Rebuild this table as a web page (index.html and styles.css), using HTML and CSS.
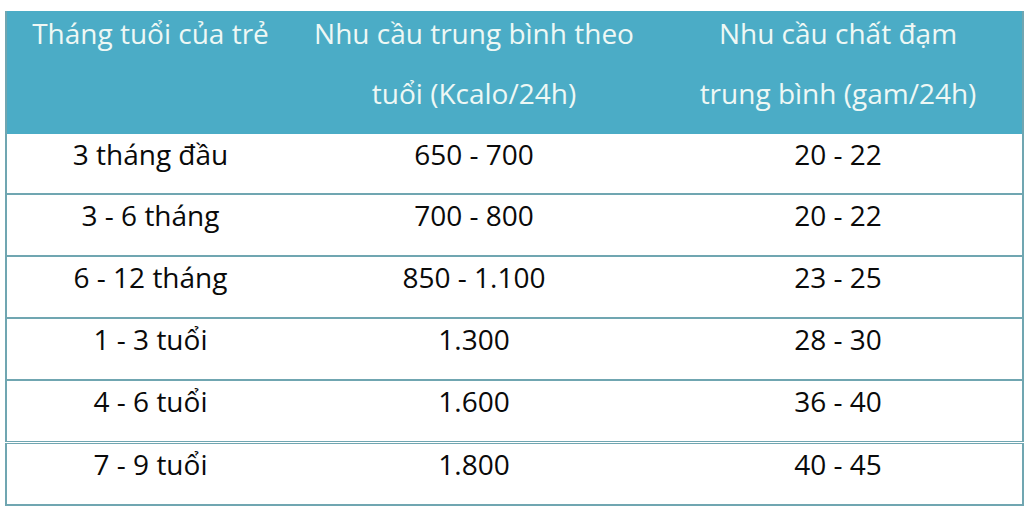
FILE: index.html
```html
<!DOCTYPE html>
<html lang="vi">
<head>
<meta charset="utf-8">
<link rel="stylesheet" href="styles.css">
</head>
<body>
<table class="nutri">
  <colgroup>
    <col class="c1"><col class="c2"><col class="c3">
  </colgroup>
  <thead>
    <tr>
      <th><div class="hd">Tháng tuổi của trẻ</div></th>
      <th><div class="hd">Nhu cầu trung bình theo<br>tuổi (Kcalo/24h)</div></th>
      <th><div class="hd">Nhu cầu chất đạm<br>trung bình (gam/24h)</div></th>
    </tr>
  </thead>
  <tbody>
    <tr class="first"><td>3 tháng đầu</td><td>650 - 700</td><td>20 - 22</td></tr>
    <tr><td>3 - 6 tháng</td><td>700 - 800</td><td>20 - 22</td></tr>
    <tr><td>6 - 12 tháng</td><td>850 - 1.100</td><td>23 - 25</td></tr>
    <tr><td>1 - 3 tuổi</td><td>1.300</td><td>28 - 30</td></tr>
    <tr><td>4 - 6 tuổi</td><td>1.600</td><td>36 - 40</td></tr>
    <tr class="last"><td>7 - 9 tuổi</td><td>1.800</td><td>40 - 45</td></tr>
  </tbody>
</table>
</body>
</html>
```
FILE: styles.css
```css
html, body {
  margin: 0;
  padding: 0;
  background: #ffffff;
}
body {
  padding: 11px 0 0 5px;
  font-family: "Open Sans", "Noto Sans", sans-serif;
}
.nutri {
  border-collapse: collapse;
  table-layout: fixed;
  width: 1017px;
  border: 2px solid #70a6b1;
  border-top: none;
}
.c1 { width: 288px; }
.c2 { width: 360px; }
.c3 { width: 369px; }
.nutri th {
  background: #4bacc6;
  color: #eef8f5;
  font-weight: normal;
  font-size: 28px;
  line-height: 60px;
  height: 123px;
  padding: 0;
  vertical-align: top;
  text-align: center;
  overflow: hidden;
}
.nutri th .hd {
  margin-top: -8px;
}
.nutri td {
  font-size: 28px;
  line-height: 41px;
  padding: 0 0 19px;
  height: 41px;
  text-align: center;
  vertical-align: top;
  color: #0a0a0a;
  border-top: 2px solid #70a6b1;
}
.nutri tr.first td {
  border-top: none;
  padding-bottom: 18px;
}
.nutri tr.last td {
  border-top: 3px double #70a6b1;
}
```
